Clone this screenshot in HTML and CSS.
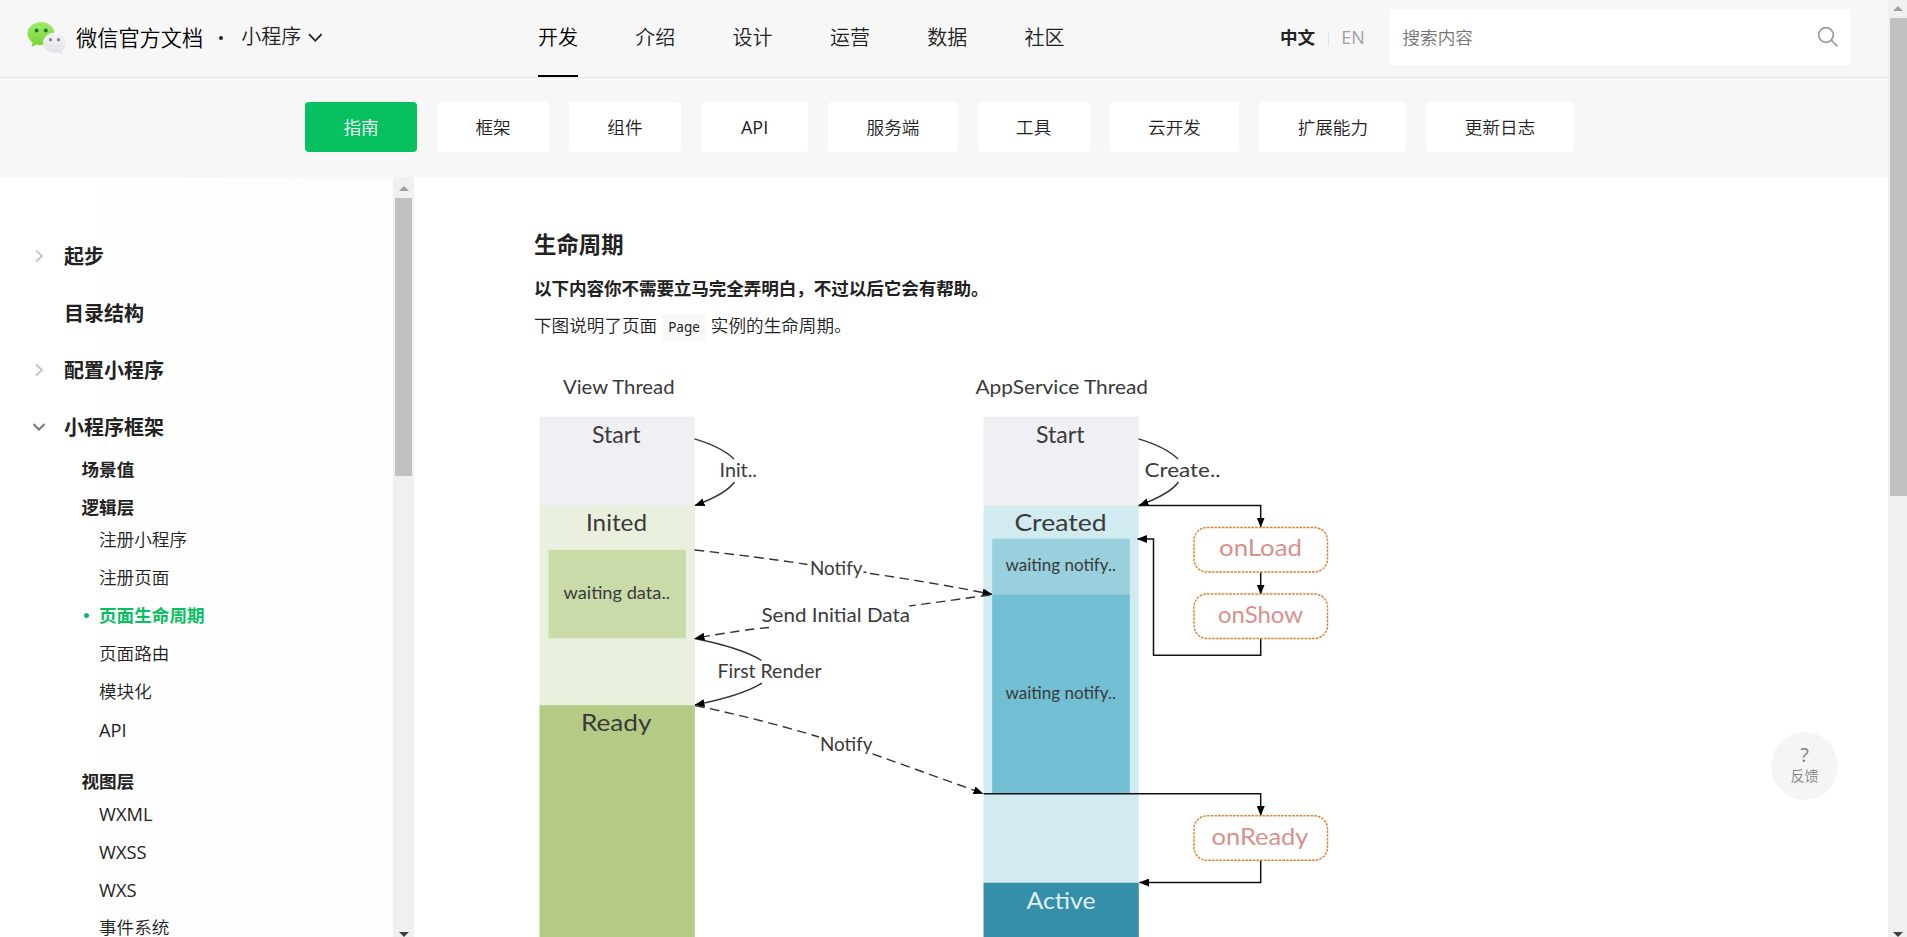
FILE: index.html
```html
<!DOCTYPE html>
<html lang="zh-CN">
<head>
<meta charset="utf-8">
<title>页面生命周期 | 微信开放文档</title>
<link rel="stylesheet" href="styles.css">
</head>
<body>
<div class="page">
  <header class="header">
    <div class="brand">
      <svg class="logo" width="40" height="34" viewBox="0 0 40 34">
        <defs>
          <linearGradient id="g1" x1="0" y1="0" x2="0" y2="1"><stop offset="0" stop-color="#9eea6a"/><stop offset="1" stop-color="#78d531"/></linearGradient>
          <linearGradient id="g2" x1="0" y1="0" x2="0" y2="1"><stop offset="0" stop-color="#f4f5f9"/><stop offset="1" stop-color="#e0e2e6"/></linearGradient>
        </defs>
        <path fill="url(#g1)" d="M14 1C6.500 1 .5 6.200.5 12.600c0 3.700 2 6.900 5.100 9L4.500 26l5-2.500c1.500.4 3 .7 4.500.7 7.500 0 13.500-5.200 13.500-11.600S21.500 1 14 1Z"/>
        <circle cx="9.600" cy="9.500" r="2" fill="#187e28"/><circle cx="18.800" cy="9.500" r="2" fill="#187e28"/>
        <path fill="url(#g2)" d="M27.500 11.800c-6.300 0-11.400 4.400-11.400 9.900s5.100 9.900 11.400 9.900c1.400 0 2.700-.2 3.900-.6l4 2-.9-3.500c2.700-1.800 4.400-4.600 4.400-7.800 0-5.500-5.100-9.900-11.400-9.900Z"/>
        <circle cx="23.500" cy="18.800" r="1.700" fill="#858c8c"/><circle cx="31.500" cy="18.800" r="1.700" fill="#858c8c"/>
      </svg>
      <span class="brand-name">微信官方文档</span>
      <span class="brand-dot"></span>
      <span class="product">小程序</span>
      <svg class="caret" width="15" height="10" viewBox="0 0 15 10"><path d="M1 1.200 7.300 7.800 13.600 1.200"/></svg>
    </div>
    <nav class="nav"><a class="on">开发</a><a>介绍</a><a>设计</a><a>运营</a><a>数据</a><a>社区</a></nav>
    <div class="lang"><b>中文</b><i></i><span>EN</span></div>
    <div class="search"><span>搜索内容</span>
      <svg width="22" height="22" viewBox="0 0 22 22"><circle cx="9" cy="9" r="7.300"/><path d="M14.200 14.200 20.500 20.500"/></svg>
    </div>
  </header>
  <nav class="tabs"><a class="on">指南</a><a>框架</a><a>组件</a><a class="latin">API</a><a>服务端</a><a>工具</a><a>云开发</a><a>扩展能力</a><a>更新日志</a></nav>
  <div class="body">
    <aside class="side">
      <ul class="menu">
        <li class="l1"><svg width="12" height="14" viewBox="0 0 12 14"><path d="M3 1.500 9 7 3 12.500"/></svg>起步</li>
        <li class="l1">目录结构</li>
        <li class="l1"><svg width="12" height="14" viewBox="0 0 12 14"><path d="M3 1.500 9 7 3 12.500"/></svg>配置小程序</li>
        <li class="l1 open"><svg width="12" height="14" viewBox="0 0 12 14"><path d="M.5 4 6 9.500 11.500 4"/></svg>小程序框架</li>
        <li class="l2">场景值</li>
        <li class="l2 group">逻辑层</li>
        <li class="l3">注册小程序</li>
        <li class="l3">注册页面</li>
        <li class="l3 current">页面生命周期</li>
        <li class="l3">页面路由</li>
        <li class="l3">模块化</li>
        <li class="l3 latin">API</li>
        <li class="l2 group next">视图层</li>
        <li class="l3 latin">WXML</li>
        <li class="l3 latin">WXSS</li>
        <li class="l3 latin">WXS</li>
        <li class="l3">事件系统</li>
      </ul>
      <div class="bar bar-side"><b class="up"></b><i></i><b class="down"></b></div>
    </aside>
    <main class="content">
      <h3>生命周期</h3>
      <p class="lead">以下内容你不需要立马完全弄明白，不过以后它会有帮助。</p>
      <p class="para">下图说明了页面<code>Page</code>实例的生命周期。</p>
      <svg class="diagram" width="800" height="577" viewBox="534 360 800 577">
        <defs>
          <marker id="a" viewBox="0 0 10 8" refX="9.500" refY="4" markerWidth="10" markerHeight="8" markerUnits="userSpaceOnUse" orient="auto"><path d="M0 0 10 4 0 8Z"/></marker>
        </defs>
        <rect x="539.500" y="416.800" width="155.300" height="89" fill="#f0eff4"/>
        <rect x="539.500" y="505.600" width="155.300" height="199.600" fill="#eaf0de"/>
        <rect x="548.500" y="549.800" width="137.500" height="88.500" fill="#c9dba8"/>
        <rect x="539.500" y="705.200" width="155.300" height="233" fill="#b5ca84"/>
        <rect x="983.500" y="416.800" width="155.300" height="89" fill="#f0eff4"/>
        <rect x="983.500" y="505.800" width="155.300" height="377" fill="#d1ebf0"/>
        <rect x="992.200" y="538.800" width="137.600" height="56" fill="#99d0de"/>
        <rect x="992.200" y="594.500" width="137.600" height="199" fill="#72bfd4"/>
        <rect x="983.500" y="882.700" width="155.300" height="56" fill="#358fa8"/>
        <g class="wire">
          <path d="M694.500 438.800Q722 447 734 459"/>
          <path d="M734.500 482Q726 494 695 505.500" marker-end="url(#a)"/>
          <path d="M1138.500 438.800Q1166 447 1178 459"/>
          <path d="M1178.500 482Q1170 494 1139 505.500" marker-end="url(#a)"/>
          <path d="M694.500 638.500Q742 648 761.500 660.500"/>
          <path d="M762 683.200Q741 696 695 705" marker-end="url(#a)"/>
          <g stroke-dasharray="9.500 5.500">
            <path d="M694.500 550Q760 557 807.500 564.500"/>
            <path d="M863.500 572.300h3M870 573.500Q930 582 992 594.300" marker-end="url(#a)"/>
            <path d="M990 595 909.500 606"/>
            <path d="M769 627.500Q744 629.500 695 638.300" marker-end="url(#a)"/>
            <path d="M695 705.500Q760 719 819 737"/>
            <path d="M872.500 753.800 983 793.500" marker-end="url(#a)"/>
          </g>
        </g>
        <g class="wire square">
          <path d="M1138.500 505.500H1260.700V527" marker-end="url(#a)"/>
          <path d="M1260.700 572V594" marker-end="url(#a)"/>
          <path d="M1260.700 638.500V655.200H1153.500V539H1137.500" marker-end="url(#a)"/>
          <path d="M983.500 793.700H1260.700V815.500" marker-end="url(#a)"/>
          <path d="M1260.700 860V882.600H1139.500" marker-end="url(#a)"/>
        </g>
        <g class="hook-box">
          <rect x="1194" y="527.500" width="133.500" height="44.500" rx="13"/>
          <rect x="1194" y="594" width="133.500" height="44.500" rx="13"/>
          <rect x="1194" y="815.800" width="133.500" height="44.500" rx="13"/>
        </g>
        <g class="t18">
          <text lengthAdjust="spacingAndGlyphs" x="563" y="393.500" textLength="111.500">View Thread</text>
          <text lengthAdjust="spacingAndGlyphs" x="975.500" y="393.500" textLength="172.500">AppService Thread</text>
          <text lengthAdjust="spacingAndGlyphs" x="719.500" y="476.500" textLength="37.500">Init..</text>
          <text lengthAdjust="spacingAndGlyphs" x="1144.500" y="476.500" textLength="76">Create..</text>
          <text lengthAdjust="spacingAndGlyphs" x="810" y="574.500" textLength="52.500">Notify</text>
          <text lengthAdjust="spacingAndGlyphs" x="761.500" y="622.300" textLength="148.500">Send Initial Data</text>
          <text lengthAdjust="spacingAndGlyphs" x="717.500" y="677.500" textLength="104">First Render</text>
          <text lengthAdjust="spacingAndGlyphs" x="820" y="751.300" textLength="52.500">Notify</text>
        </g>
        <g class="t23">
          <text lengthAdjust="spacingAndGlyphs" x="592" y="442.500" textLength="48.500">Start</text>
          <text lengthAdjust="spacingAndGlyphs" x="1036" y="442.500" textLength="48.500">Start</text>
          <text lengthAdjust="spacingAndGlyphs" x="586" y="531.300" textLength="61">Inited</text>
          <text lengthAdjust="spacingAndGlyphs" x="1014.500" y="531.300" textLength="92">Created</text>
          <text lengthAdjust="spacingAndGlyphs" x="581" y="731" textLength="70.500">Ready</text>
          <text lengthAdjust="spacingAndGlyphs" class="pale" x="1026.500" y="908.700" textLength="69">Active</text>
        </g>
        <g class="t16">
          <text lengthAdjust="spacingAndGlyphs" x="563.500" y="598.500" textLength="106.500">waiting data..</text>
          <text lengthAdjust="spacingAndGlyphs" x="1005.500" y="571.300" textLength="110.500">waiting notify..</text>
          <text lengthAdjust="spacingAndGlyphs" x="1005.500" y="699" textLength="110.500">waiting notify..</text>
        </g>
        <g class="t22">
          <text lengthAdjust="spacingAndGlyphs" x="1219" y="556" textLength="83">onLoad</text>
          <text lengthAdjust="spacingAndGlyphs" x="1218" y="622.700" textLength="85">onShow</text>
          <text lengthAdjust="spacingAndGlyphs" x="1211.500" y="844.500" textLength="97">onReady</text>
        </g>
      </svg>
    </main>
  </div>
  <a class="feedback"><span>?</span>反馈</a>
</div>
<div class="bar bar-page"><b class="up"></b><i></i><b class="down"></b></div>
</body>
</html>
```

FILE: styles.css
```css
* { box-sizing: border-box; }
body {
  margin: 0;
  display: flex;
  height: 937px;
  overflow: hidden;
  background: #fff;
  color: #222;
  font-family: "Open Sans", "Noto Sans CJK SC", sans-serif;
  font-weight: 350;
  font-size: 17.6px;
}
.page { width: 1888px; display: flex; flex-direction: column; position: relative; }

/* top header */
.header {
  height: 78px;
  flex: none;
  display: flex;
  align-items: center;
  background: #f7f7f7;
  border-bottom: 1px solid #e6e6e6;
}
.brand { display: flex; align-items: center; width: 538px; padding-left: 27px; white-space: nowrap; }
.logo { flex: none; margin-top: -1px; }
.brand-name { font-size: 21.2px; line-height: 30px; margin: -2px 0 0 9px; color: #000; }
.brand-dot { width: 4px; height: 4px; border-radius: 50%; background: #222; margin: -2px 18px 0 16px; }
.product { font-size: 20px; line-height: 30px; margin-top: -4px; }
.caret { margin: -1px 0 0 7px; fill: none; stroke: #222; stroke-width: 1.8; }
.nav { display: flex; gap: 57.3px; width: 743px; height: 77px; font-size: 20px; line-height: 75px; }
.nav .on { color: #000; border-bottom: 2px solid #000; }
.lang { display: flex; align-items: center; width: 109px; line-height: 72px; margin-top: -3px; }
.lang b { font-weight: 700; margin-left: -1px; }
.lang i { width: 1px; height: 15px; background: #e2e2e2; margin: 2px 12px 0 13px; }
.lang span { color: #a0a0a0; font-size: 18px; font-weight: 400; }
.search {
  width: 460px;
  height: 56px;
  margin-top: -3px;
  padding: 0 10px 0 12.5px;
  display: flex;
  align-items: center;
  justify-content: space-between;
  background: #fff;
  border-radius: 4px;
  color: #757575;
}
.search span { margin-top: -2px; }
.search svg { fill: none; stroke: #9a9a9a; stroke-width: 1.700; margin-right: 1px; }

/* section tabs */
.tabs { height: 99px; flex: none; display: flex; gap: 20px; padding: 24px 0 25px 305px; background: #f7f7f7; }
.tabs a { padding: 0 38.4px; line-height: 50px; background: #fff; border-radius: 4px; white-space: nowrap; }
.tabs .on { background: #07c160; color: #fff; }
.tabs .latin { width: 107.2px; padding: 0; text-align: center; font-size: 18px; font-weight: 400; }

.body { flex: 1; min-height: 0; display: flex; }

/* side menu */
.side { width: 414px; flex: none; display: flex; background: linear-gradient(90deg, #fff, #fcfcfc); }
.menu { width: 393px; margin: 0; padding: 50px 0 0; list-style: none; overflow: hidden; }
.menu li { white-space: nowrap; }
.l1 { display: flex; align-items: center; height: 57px; padding-left: 64px; font-size: 20px; font-weight: 700; }
.l1 svg { margin: 0 19px 0 -31px; flex: none; fill: none; stroke: #c4c4c4; stroke-width: 1.800; }
.l1.open svg { stroke: #7a7a7a; stroke-width: 2; }
.l2 { height: 38px; padding-left: 81.5px; line-height: 38px; font-weight: 700; margin-top: -5px; }
.l2.group { height: 33px; margin-top: 0; }
.l2.group.next { margin-top: 13px; }
.l3 { height: 38px; padding-left: 99px; line-height: 37.6px; }
.l3.latin { font-size: 18.3px; font-weight: 400; line-height: 38.6px; }
.l3.current { color: #07c160; font-weight: 700; display: flex; align-items: center; padding-left: 84px; }
.l3.current::before { content: ""; width: 5px; height: 5px; border-radius: 50%; background: #07c160; margin: -2px 10px 0 0; }

/* scrollbars */
.bar { background: #f0f0f0; display: flex; flex-direction: column; align-items: center; flex: none; overflow: hidden; }
.bar b { border: 5px solid transparent; width: 0; height: 0; flex: none; }
.bar .up { border-top: 0; border-bottom-color: #a0a0a0; }
.bar .down { border-bottom: 0; border-top-color: #404040; margin-top: auto; }
.bar i { width: 17px; background: #c1c1c1; flex: none; }
.bar-side { width: 21px; padding-top: 9px; }
.bar-side i { height: 278px; margin-top: 7px; }
.bar-page { width: 19px; padding-top: 6px; align-items: flex-end; }
.bar-page b { margin-right: 4px; }
.bar-page i { height: 478px; margin-top: 7px; }

/* article */
.content { padding: 50px 0 0 120px; flex: 1; min-width: 0; overflow: hidden; }
h3 { margin: 0; font-size: 22.4px; line-height: 36px; font-weight: 700; }
.lead { margin: 7px 0 0; line-height: 36px; font-weight: 700; letter-spacing: -.11px; }
.para { margin: 1px 0 0; line-height: 36px; height: 36px; }
code {
  font: 400 13.500px/27px "Noto Sans", sans-serif;
  display: inline-block;
  padding: 0 6px;
  margin: 0 5px;
  background: #f9f9f9;
  border-radius: 3px;
}
.diagram { display: block; margin-top: 17px; font-family: Lato, sans-serif; font-weight: 400; }
.diagram text { fill: #3a3a3a; }
.t16 { font-size: 16.500px; }
.t18 { font-size: 18.800px; }
.t22 { font-size: 22.500px; }
.t23 { font-size: 23px; }
.diagram .t22 text { fill: #d98f8a; }
.diagram .pale { fill: #dff1f5; }
.wire { fill: none; stroke: #333; stroke-width: 1.400; }
.square { stroke: #111; stroke-width: 1.500; }
.hook-box { fill: #fff; stroke: #e0812e; stroke-width: 1.400; stroke-dasharray: 2.600 1.100; }

/* floating feedback button */
.feedback {
  position: absolute;
  left: 1771px;
  top: 732px;
  width: 67px;
  height: 68px;
  border-radius: 50%;
  background: #f5f5f5;
  color: #808080;
  font-size: 14px;
  line-height: 20px;
  text-align: center;
  padding-top: 12px;
}
.feedback span { display: block; font-size: 20px; line-height: 22px; font-weight: 400; }
```
